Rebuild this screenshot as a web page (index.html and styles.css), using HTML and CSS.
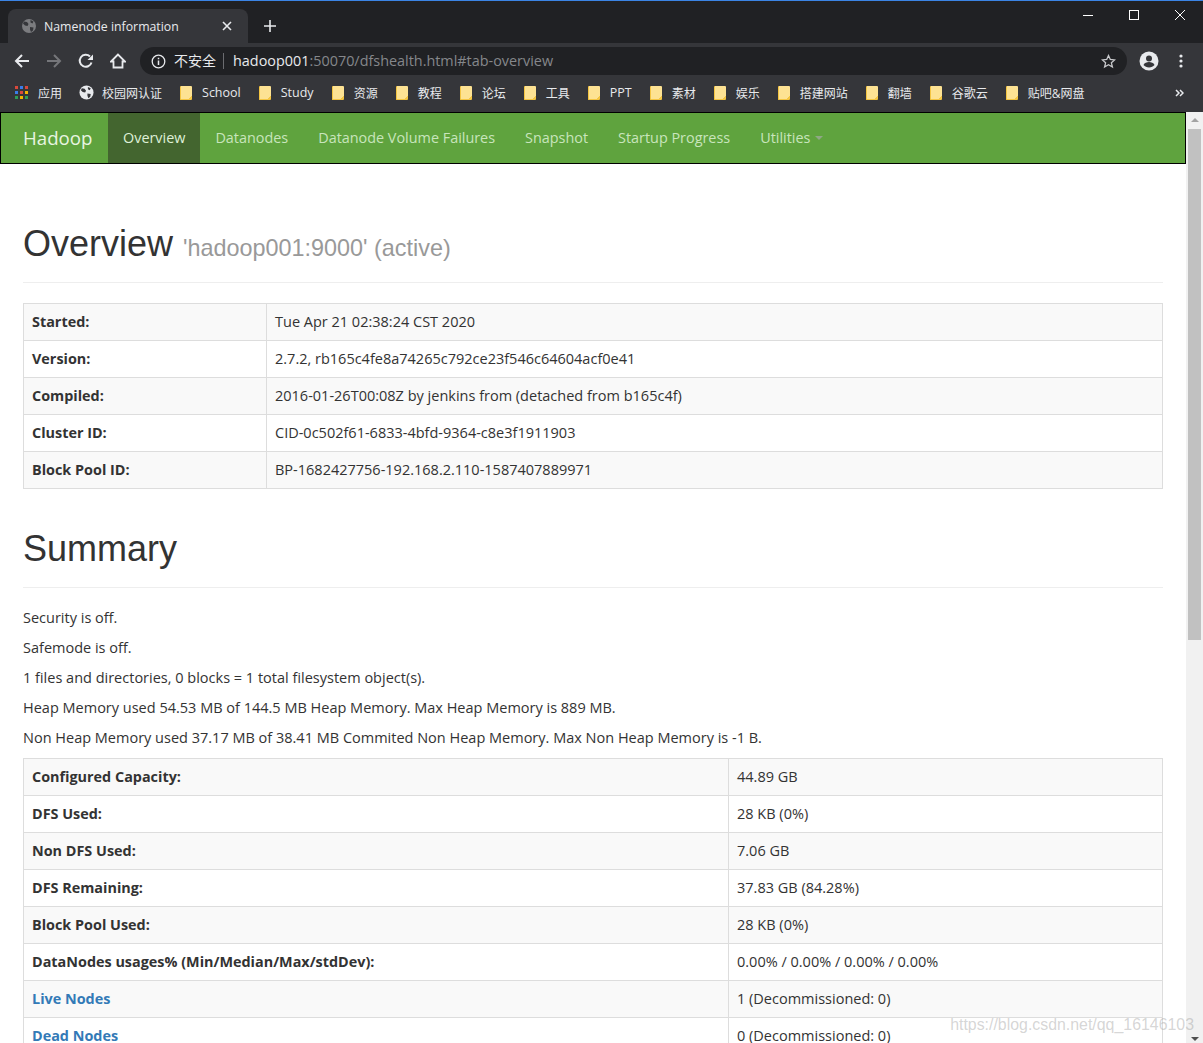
FILE: index.html
```html
<!DOCTYPE html>
<html lang="en">
<head>
  <meta charset="UTF-8" />
  <title>Namenode information</title>
  <link rel="stylesheet" href="styles.css">
</head>
<body>
  <!-- Browser chrome -->
  <div class="tabstrip">
    <div class="tab">
      <svg class="tab-globe" width="16" height="16" viewBox="0 0 16 16"><circle cx="8" cy="8" r="7" fill="#7b7c7f"/><path d="M3 3.500l3 .5 1.500 2-1 2-2.500-.5-2-2zM9 9l3.500.5-.5 3-2 1.500-1-2.500zM9.500 2l3 1.500-1 2-2-1z" fill="#35363a"/></svg>
      <span class="tab-title">Namenode information</span>
      <svg class="tab-close" width="10" height="10" viewBox="0 0 10 10"><path d="M1 1l8 8M9 1l-8 8" stroke="#e8eaed" stroke-width="1.600"/></svg>
    </div>
    <svg class="new-tab" width="12" height="12" viewBox="0 0 12 12"><path d="M6 0v12M0 6h12" stroke="#e8eaed" stroke-width="1.600"/></svg>
    <div class="window-btns">
      <svg width="12" height="12" viewBox="0 0 12 12"><path d="M1 6.500h10" stroke="#fff"/></svg>
      <svg width="12" height="12" viewBox="0 0 12 12"><rect x="1.500" y="1.500" width="9" height="9" fill="none" stroke="#fff"/></svg>
      <svg width="12" height="12" viewBox="0 0 12 12"><path d="M1 1l10 10M11 1l-10 10" stroke="#fff"/></svg>
    </div>
  </div>

  <div class="toolbar">
    <svg class="tool" width="16" height="16" viewBox="0 0 16 16"><path d="M15 8H2M8 2L2 8l6 6" fill="none" stroke="#e8eaed" stroke-width="2"/></svg>
    <svg class="tool" width="16" height="16" viewBox="0 0 16 16"><path d="M1 8h13M8 2l6 6-6 6" fill="none" stroke="#75767a" stroke-width="2"/></svg>
    <svg class="tool" width="16" height="16" viewBox="0 0 16 16"><path d="M13.500 9.500A6 6 0 1 1 12 3.500" fill="none" stroke="#e8eaed" stroke-width="2"/><path d="M9.500 7H15V1.500z" fill="#e8eaed"/></svg>
    <svg class="tool" width="16" height="16" viewBox="0 0 16 16"><path d="M8 1.500L1 8.500h2.500v6h9v-6H15z" fill="none" stroke="#e8eaed" stroke-width="1.800"/></svg>
    <div class="omnibox">
      <svg width="15" height="15" viewBox="0 0 15 15"><circle cx="7.500" cy="7.500" r="6.300" fill="none" stroke="#e8eaed" stroke-width="1.300"/><path d="M7.500 6.500v4.500M7.500 3.800v1.500" stroke="#e8eaed" stroke-width="1.500"/></svg>
      <span class="not-secure">不安全</span>
      <span class="omni-sep"></span>
      <span class="url"><b>hadoop001</b>:50070/dfshealth.html#tab-overview</span>
      <svg class="star" width="15" height="15" viewBox="0 0 15 15"><path d="M7.500 1.500l1.800 4 4.300.4-3.200 2.900 1 4.200-3.900-2.200-3.900 2.200 1-4.200L1.400 5.900l4.300-.4z" fill="none" stroke="#c8c9cc" stroke-width="1.300"/></svg>
    </div>
    <svg class="avatar" width="20" height="20" viewBox="0 0 20 20"><circle cx="10" cy="10" r="9.500" fill="#e8eaed"/><circle cx="10" cy="7.500" r="3" fill="#35363a"/><path d="M4.500 14c1-2.200 3.200-3 5.500-3s4.500.8 5.500 3c-1.300 1.500-3.300 2.500-5.500 2.500S5.800 15.500 4.500 14z" fill="#35363a"/></svg>
    <svg class="menu-dots" width="4" height="14" viewBox="0 0 4 14"><circle cx="2" cy="2" r="1.600" fill="#e8eaed"/><circle cx="2" cy="7" r="1.600" fill="#e8eaed"/><circle cx="2" cy="12" r="1.600" fill="#e8eaed"/></svg>
  </div>

  <div class="bookmarks">
    <span class="bm bm-apps">
      <svg width="13" height="14" viewBox="0 0 13 14"><rect width="3" height="3" fill="#d8483b"/><rect x="5" width="3" height="3" fill="#3a7de8"/><rect x="10" width="3" height="3" fill="#d8483b"/><rect y="5" width="3" height="3" fill="#3a7de8"/><rect x="5" y="5" width="3" height="3" fill="#d8483b"/><rect x="10" y="5" width="3" height="3" fill="#f2b500"/><rect y="10" width="3" height="3" fill="#2f9e55"/><rect x="5" y="10" width="3" height="3" fill="#f2b500"/><rect x="10" y="10" width="3" height="3" fill="#2f9e55"/></svg>
      应用
    </span>
    <span class="bm bm-campus">
      <svg width="15" height="15" viewBox="0 0 16 16"><circle cx="8" cy="8" r="7.500" fill="#e8eaed"/><path d="M3 3.500l3 .5 1.500 2-1 2-2.500-.5-2-2zM9 9l3.500.5-.5 3-2 1.500-1-2.500zM9.500 2l3 1.500-1 2-2-1z" fill="#35363a"/></svg>
      校园网认证
    </span>
    <span class="bm bm-latin"><i class="folder"></i>School</span>
    <span class="bm bm-latin"><i class="folder"></i>Study</span>
    <span class="bm"><i class="folder"></i>资源</span>
    <span class="bm"><i class="folder"></i>教程</span>
    <span class="bm"><i class="folder"></i>论坛</span>
    <span class="bm"><i class="folder"></i>工具</span>
    <span class="bm bm-latin"><i class="folder"></i>PPT</span>
    <span class="bm"><i class="folder"></i>素材</span>
    <span class="bm"><i class="folder"></i>娱乐</span>
    <span class="bm"><i class="folder"></i>搭建网站</span>
    <span class="bm"><i class="folder"></i>翻墙</span>
    <span class="bm"><i class="folder"></i>谷歌云</span>
    <span class="bm"><i class="folder"></i>贴吧&amp;网盘</span>
    <svg class="bm-more" width="9" height="8" viewBox="0 0 9 8"><path d="M1 1l3 3-3 3M5 1l3 3-3 3" fill="none" stroke="#e8eaed" stroke-width="1.500"/></svg>
  </div>

  <!-- Page -->
  <div class="viewport">
    <div class="page">
      <nav class="navbar">
        <a class="brand">Hadoop</a>
        <a class="nav-item active">Overview</a>
        <a class="nav-item">Datanodes</a>
        <a class="nav-item">Datanode Volume Failures</a>
        <a class="nav-item">Snapshot</a>
        <a class="nav-item">Startup Progress</a>
        <a class="nav-item">Utilities <i class="caret"></i></a>
      </nav>

      <div class="container">
        <div class="page-header">
          <h1>Overview <small>'hadoop001:9000' (active)</small></h1>
        </div>

        <table class="info-table first">
          <tr><th>Started:</th><td>Tue Apr 21 02:38:24 CST 2020</td></tr>
          <tr><th>Version:</th><td>2.7.2, rb165c4fe8a74265c792ce23f546c64604acf0e41</td></tr>
          <tr><th>Compiled:</th><td>2016-01-26T00:08Z by jenkins from (detached from b165c4f)</td></tr>
          <tr><th>Cluster ID:</th><td>CID-0c502f61-6833-4bfd-9364-c8e3f1911903</td></tr>
          <tr><th>Block Pool ID:</th><td>BP-1682427756-192.168.2.110-1587407889971</td></tr>
        </table>

        <div class="page-header">
          <h1>Summary</h1>
        </div>

        <p>Security is off.</p>
        <p>Safemode is off.</p>
        <p>1 files and directories, 0 blocks = 1 total filesystem object(s).</p>
        <p>Heap Memory used 54.53 MB of 144.5 MB Heap Memory. Max Heap Memory is 889 MB.</p>
        <p>Non Heap Memory used 37.17 MB of 38.41 MB Commited Non Heap Memory. Max Non Heap Memory is -1 B.</p>

        <table class="info-table second">
          <tr><th>Configured Capacity:</th><td>44.89 GB</td></tr>
          <tr><th>DFS Used:</th><td>28 KB (0%)</td></tr>
          <tr><th>Non DFS Used:</th><td>7.06 GB</td></tr>
          <tr><th>DFS Remaining:</th><td>37.83 GB (84.28%)</td></tr>
          <tr><th>Block Pool Used:</th><td>28 KB (0%)</td></tr>
          <tr><th>DataNodes usages% (Min/Median/Max/stdDev):</th><td>0.00% / 0.00% / 0.00% / 0.00%</td></tr>
          <tr><th><a>Live Nodes</a></th><td>1 (Decommissioned: 0)</td></tr>
          <tr><th><a>Dead Nodes</a></th><td>0 (Decommissioned: 0)</td></tr>
        </table>
      </div>
    </div>

    <div class="scrollbar">
      <i class="arrow-up"></i>
      <div class="thumb"></div>
      <i class="arrow-down"></i>
    </div>

    <div class="watermark">https://blog.csdn.net/qq_16146103</div>
  </div>
</body>
</html>
```

FILE: styles.css
```css
:root {
  --chrome-dark: #202124;
  --chrome: #35363a;
  --green: #5fa33e;
  --border: #ddd;
  --body-font: "Open Sans", "Noto Sans CJK SC", sans-serif;
  --head-font: "Liberation Sans", Arial, sans-serif;
}

* {
  box-sizing: border-box;
}

html, body {
  height: 100%;
}

body {
  margin: 0;
  display: flex;
  flex-direction: column;
  overflow: hidden;
  background: #fff;
  color: #333;
  font-family: var(--body-font);
  font-size: 14.5px;
}

/* browser chrome */

.tabstrip {
  height: 43px;
  flex: none;
  display: flex;
  align-items: flex-end;
  padding-left: 8px;
  background: var(--chrome-dark);
  border-top: 1px solid #3b84e5;
}

.tab {
  width: 240px;
  height: 34px;
  display: flex;
  align-items: center;
  padding: 0 16px 0 13px;
  background: var(--chrome);
  border-radius: 8px 8px 0 0;
  color: #e8eaed;
  font-size: 12.3px;
}

.tab-title {
  flex: 1;
  margin-left: 7px;
}

.new-tab {
  margin: 0 0 11px 16px;
}

.window-btns {
  margin-left: auto;
  align-self: flex-start;
  display: flex;
  gap: 34px;
  padding: 8px 17px 0 0;
}

.toolbar {
  height: 32px;
  flex: none;
  display: flex;
  align-items: center;
  padding: 4px 0 0 14px;
  background: var(--chrome);
}

.tool {
  margin-right: 16px;
}

.omnibox {
  width: 987px;
  height: 28px;
  margin-left: -2px;
  display: flex;
  align-items: center;
  padding: 0 11px;
  background: var(--chrome-dark);
  border-radius: 14px;
  color: #e8eaed;
}

.not-secure {
  margin-left: 8px;
  margin-bottom: 2px;
  font-size: 14px;
}

.omni-sep {
  width: 1px;
  height: 16px;
  margin: 0 9px 0 7px;
  background: #6b6c70;
}

.url {
  flex: 1;
  margin-bottom: 2px;
  color: #85878b;
  font-size: 14.4px;
}

.url b {
  color: #e8eaed;
  font-weight: 400;
}

.avatar {
  margin-left: 12px;
}

.menu-dots {
  margin-left: 20px;
}

.bookmarks {
  height: 37px;
  flex: none;
  position: relative;
  display: flex;
  align-items: center;
  gap: 18px;
  padding: 0 0 2px 15px;
  background: var(--chrome);
  color: #e8eaed;
  font-size: 12px;
}

.bm {
  display: flex;
  align-items: center;
  gap: 10px;
}

.bm-latin {
  font-size: 12.5px;
}

.bm-apps {
  margin-right: -1px;
}

.bm-campus {
  gap: 8px;
}

/* folder with the small folded corner */
.folder {
  width: 12px;
  height: 14px;
  background: linear-gradient(135deg, #fde293 85%, #f4c542 85%);
  border: 1px solid #f4c542;
  border-width: 0 0 1px 1px;
  border-radius: 1px;
}

.bm-more {
  position: absolute;
  right: 19px;
  top: 14px;
}

/* page */

.viewport {
  flex: 1;
  min-height: 0;
  position: relative;
  display: flex;
}

.page {
  flex: 1;
  min-width: 0;
  overflow: hidden;
}

.navbar {
  height: 52px;
  display: flex;
  align-items: stretch;
  padding-bottom: 2px;
  background: var(--green);
  border: 1px solid #000;
}

.brand {
  display: flex;
  align-items: center;
  width: 107px;
  padding-left: 22px;
  color: #e8f5e1;
  font-size: 18.7px;
}

.nav-item {
  display: flex;
  align-items: center;
  gap: 5px;
  padding: 0 15px;
  color: #c8e5bc;
  font-size: 14.4px;
}

.nav-item.active {
  margin-bottom: -2px;
  padding-bottom: 2px;
  background: #43652f;
  color: #dff0d8;
}

.caret {
  width: 0;
  height: 0;
  margin-top: 2px;
  border-top: 4px solid #8fa886;
  border-left: 4px solid transparent;
  border-right: 4px solid transparent;
}

.container {
  padding: 60px 23px 0;
}

.page-header {
  margin-bottom: 20px;
  padding-bottom: 9px;
  border-bottom: 1px solid #eee;
}

h1 {
  height: 39px;
  margin: 0 0 10px;
  font-family: var(--head-font);
  font-size: 36px;
  font-weight: 500;
  line-height: 39px;
  color: #333;
}

h1 small {
  font-size: 23.4px;
  line-height: 1;
  color: #999;
}

p {
  margin: 0 0 10px;
  line-height: 20px;
}

.info-table {
  width: 100%;
  margin-bottom: 40px;
  table-layout: fixed;
  border-collapse: collapse;
  border: 1px solid var(--border);
}

.info-table.second {
  margin-bottom: 0;
}

.info-table th, .info-table td {
  height: 37px;
  padding: 8px;
  border: 1px solid var(--border);
  font-size: 14.5px;
  line-height: 20px;
  text-align: left;
}

.info-table th {
  font-size: 14.4px;
}

.info-table tr:nth-child(odd) {
  background: #f9f9f9;
}

.first th {
  width: 243px;
}

.second th {
  width: 705px;
}

.info-table a {
  color: #337ab7;
}

/* fake scrollbar + watermark */

.scrollbar {
  width: 17px;
  flex: none;
  position: relative;
  background: #f1f1f1;
}

.thumb {
  position: absolute;
  top: 17px;
  left: 2px;
  width: 13px;
  height: 511px;
  background: #c1c1c1;
}

.arrow-up, .arrow-down {
  position: absolute;
  left: 5px;
  width: 0;
  height: 0;
  border-left: 4px solid transparent;
  border-right: 4px solid transparent;
}

.arrow-up {
  top: 6px;
  border-bottom: 4px solid #a3a3a3;
}

.arrow-down {
  bottom: 2px;
  border-top: 4px solid #505050;
}

.watermark {
  position: absolute;
  right: 9px;
  bottom: 9px;
  font-family: var(--head-font);
  font-size: 15.9px;
  color: rgba(150, 150, 150, 0.4);
  white-space: nowrap;
}
```
